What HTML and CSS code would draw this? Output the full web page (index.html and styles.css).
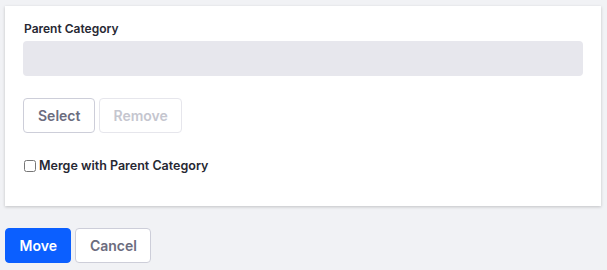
FILE: index.html
```html
<!DOCTYPE html>
<html lang="en">
<head>
<meta charset="utf-8">
<title>Move Category</title>
<link rel="stylesheet" href="styles.css">
</head>
<body>
<div class="page">
  <div class="card">
    <label class="field-label">Parent Category</label>
    <div class="readonly-input"></div>
    <div class="btn-row">
      <button class="btn btn-secondary">Select</button>
      <button class="btn btn-secondary" disabled>Remove</button>
    </div>
    <label class="check">
      <input type="checkbox" class="check-box">
      <span>Merge with Parent Category</span>
    </label>
  </div>
  <div class="actions">
    <button class="btn btn-primary">Move</button>
    <button class="btn btn-secondary">Cancel</button>
  </div>
</div>
</body>
</html>
```

FILE: styles.css
```css
html, body {
  margin: 0;
  padding: 0;
  background: #f1f2f5;
  font-family: Inter, "Noto Sans", "Liberation Sans", sans-serif;
  color: #272833;
}
.page {
  padding: 6px 6px 0 5px;
}
.card {
  background: #fff;
  box-shadow: 0 1px 3px rgba(0, 0, 0, 0.2);
  padding: 14px 18px 0 18px;
  height: 186px;
  display: flex;
  flex-direction: column;
  align-items: flex-start;
}
.field-label {
  display: block;
  font-size: 12px;
  font-weight: 600;
  line-height: 18px;
  margin-bottom: 3px;
  margin-left: 1px;
}
.readonly-input {
  align-self: stretch;
  height: 35px;
  background: #e7e7ed;
  border-radius: 4px;
}
.btn-row {
  display: flex;
  gap: 4px;
  margin-top: 22px;
}
.btn {
  font-family: inherit;
  font-size: 14px;
  font-weight: 600;
  height: 35px;
  padding: 0 14px;
  border-radius: 4px;
  border: 1px solid #cdced9;
  background: #fff;
  color: #6b6c7e;
  cursor: pointer;
  line-height: 1;
}
.btn-secondary:disabled {
  color: #c5c6cf;
  border-color: #e6e6ec;
  padding: 0 13px;
  cursor: default;
}
.check {
  display: flex;
  align-items: center;
  gap: 3px;
  margin-top: 23px;
  font-size: 12.5px;
  font-weight: 600;
  line-height: 20px;
}
.check-box {
  width: 12px;
  height: 12px;
  margin: 0 0 0 1px;
}
.actions {
  display: flex;
  gap: 4px;
  margin-top: 22px;
}
.actions .btn {
  padding: 0 13.5px;
}
.btn-primary {
  background: #0b5fff;
  border-color: #0b5fff;
  color: #fff;
}
```
